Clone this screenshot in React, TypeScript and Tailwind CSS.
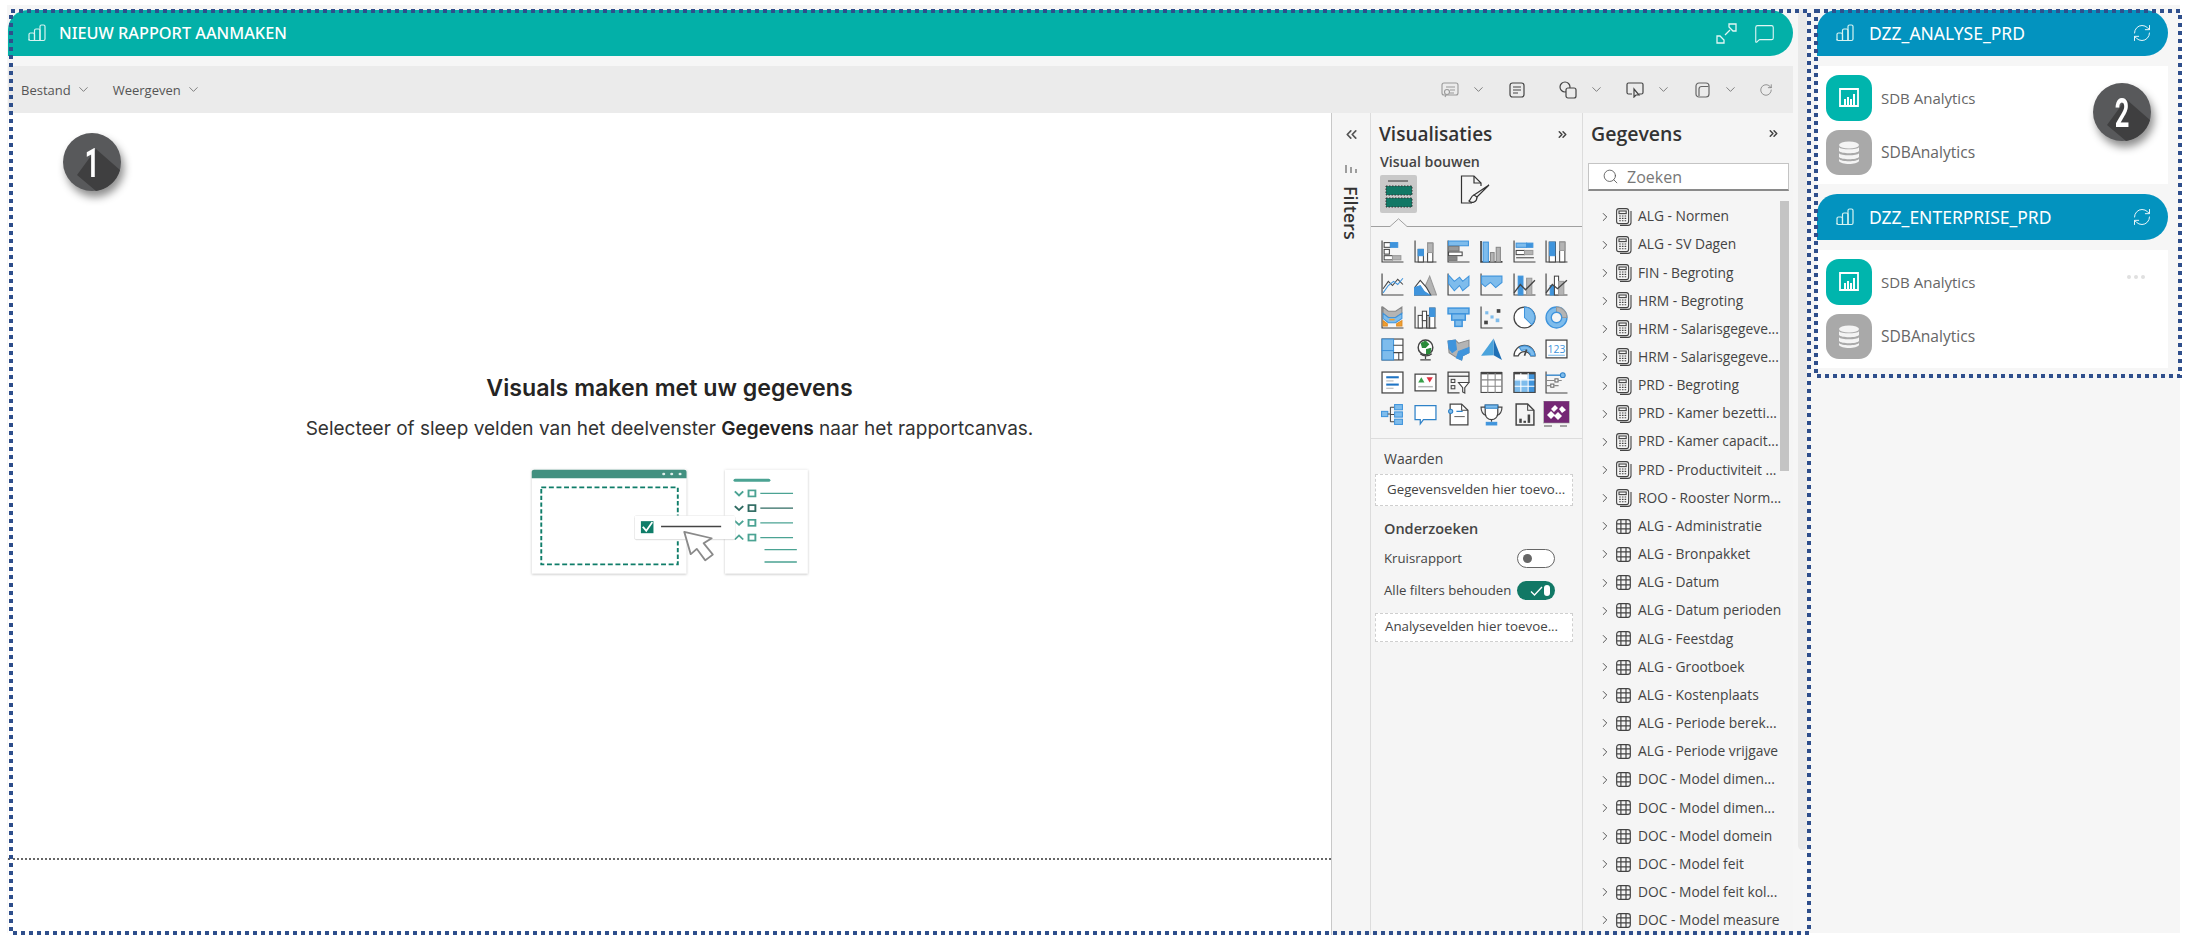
import React from "react";
import { ChevronDown, ChevronRight, ChevronsLeft, ChevronsRight, RefreshCw, RotateCw, Search, MessageSquare } from "lucide-react";

const B = "#3f94dc";
const L = "#7ebcec";
const G = "#b4b4b4";
const D = "#454545";

function I({ children }: { children: React.ReactNode }) {
  return (
    <svg width="23" height="23" viewBox="0 0 22 22" fill="none" stroke={D} strokeWidth="1">
      {children}
    </svg>
  );
}
const Axis = () => <path d="M1 0.5V21H21.5" stroke={D} strokeWidth="1.1" />;

const vizIcons: React.ReactNode[] = [
  <I><Axis /><rect x="3" y="2.5" width="6" height="4.5" fill="#fff" /><rect x="9" y="2.5" width="7" height="4.5" fill={B} stroke={B} /><rect x="3" y="9" width="5" height="4.5" fill="#fff" /><rect x="3" y="15" width="8" height="4" fill="#fff" /><rect x="11" y="15" width="8" height="4" fill={G} stroke="#999" /></I>,
  <I><Axis /><rect x="4" y="9" width="5" height="12" fill="#fff" /><rect x="4" y="9" width="5" height="6" fill={B} stroke={B} /><rect x="13" y="3" width="5" height="18" fill="#fff" /><rect x="13" y="3" width="5" height="9" fill={G} stroke="#999" /></I>,
  <I><Axis /><rect x="1.5" y="1" width="19" height="4.5" fill={L} stroke={B} /><rect x="1.5" y="6" width="10" height="4.5" fill="#999" stroke="#777" /><rect x="1.5" y="11.5" width="13" height="3.5" fill="#fff" /><rect x="1.5" y="16" width="8" height="3.5" fill="#888" stroke="#777" /></I>,
  <I><path d="M1 1V21H21.5" strokeWidth="1.6" /><rect x="3" y="2" width="5" height="19" fill={L} stroke={B} /><rect x="10" y="12" width="3.5" height="9" fill={G} stroke="#888" /><rect x="15.5" y="7" width="4" height="14" fill={G} stroke="#888" /></I>,
  <I><Axis /><rect x="3" y="3" width="10" height="4" fill={L} stroke={B} /><rect x="13" y="3" width="6" height="4" fill={B} stroke={B} /><rect x="3" y="10" width="8" height="4" fill="#fff" /><rect x="11" y="10" width="8" height="4" fill={G} stroke="#999" /><path d="M3 17H20" /></I>,
  <I><Axis /><rect x="4" y="2" width="6" height="19" fill="#fff" /><rect x="4.5" y="2" width="5" height="13" fill={B} stroke={B} /><rect x="14" y="2" width="5" height="19" fill="#fff" /><rect x="14" y="2" width="5" height="8" fill={G} stroke="#999" /></I>,

  <I><Axis /><path d="M2 15L7 8L11 12L16 6L21 11" stroke={D} /><path d="M2 19L7 12L12 8L16 11L21 5" stroke={B} /></I>,
  <I><path d="M0.5 21L7 10L10 14L15 3L21.5 21Z" fill={G} stroke="#999" /><path d="M0.5 21V14L6 7L12 14L16 21Z" fill="#fff" stroke={D} /><path d="M0.5 21V14L6 12L10 18L15 21Z" fill={B} stroke={B} /></I>,
  <I><Axis /><path d="M1.5 2L7 8L12 4L15 8L21 3V12L15 17L12 12L7 17L1.5 10Z" fill={L} stroke={B} /></I>,
  <I><Axis /><path d="M1.5 3H21V9L15 14L10 9L5 13L1.5 10Z" fill={L} stroke={B} /></I>,
  <I><Axis /><rect x="5" y="3" width="4.5" height="18" fill={B} stroke={B} /><rect x="13" y="5" width="5" height="16" fill={G} stroke="#999" /><path d="M1 19L7 11L12 16L21 7" stroke={D} strokeWidth="1.3" /></I>,
  <I><Axis /><rect x="5" y="12" width="4" height="9" fill={B} stroke={B} /><rect x="9" y="3" width="4" height="18" fill="#fff" /><rect x="13" y="8" width="5" height="13" fill={G} stroke="#999" /><path d="M1 19L7 11L12 15L21 7" stroke={D} strokeWidth="1.3" /></I>,

  <I><Axis /><path d="M2 1L7 5H14L20 1V7L14 11H7L2 7Z" fill={G} stroke="#888" /><path d="M2 7L7 11H14L20 7V12L14 16H7L2 12Z" fill={L} stroke={B} /><path d="M2 14L6 17V19H2ZM20 14V19H15V17Z" fill="#f0a030" stroke="#e08a20" /><path d="M8 13H13" stroke="#f0a030" strokeWidth="1.6" /></I>,
  <I><Axis /><rect x="4" y="9" width="4" height="12" fill="#fff" /><rect x="8" y="5" width="4" height="9" fill="#fff" /><rect x="12" y="9" width="3" height="12" fill={G} /><rect x="15" y="2" width="5" height="19" fill="#fff" /><rect x="15" y="2" width="5" height="8" fill={B} stroke={B} /></I>,
  <I><rect x="1" y="2" width="20" height="5.5" fill={L} stroke={B} strokeWidth="1.4" /><rect x="4.5" y="7.5" width="13" height="6" fill={L} stroke={B} strokeWidth="1.4" /><rect x="7.5" y="13.5" width="7" height="6" fill={L} stroke={B} strokeWidth="1.4" /></I>,
  <I><Axis /><rect x="5" y="5" width="3" height="3" fill={L} stroke="none" /><rect x="16" y="3" width="3.5" height="3.5" fill={D} stroke="none" /><rect x="10" y="9" width="3" height="3" fill={L} stroke="none" /><rect x="4" y="14" width="3.5" height="3.5" fill={D} stroke="none" /><rect x="15" y="12" width="3.5" height="3.5" fill={L} stroke="none" /></I>,
  <I><circle cx="11" cy="11" r="10" fill="#fff" strokeWidth="1.2" /><path d="M11 1A10 10 0 0 1 18 18L11 11Z" fill={L} stroke={B} /></I>,
  <I><circle cx="11" cy="11" r="10" fill={L} stroke={B} strokeWidth="1.3" /><path d="M11 1A10 10 0 0 1 21 11H16A5 5 0 0 0 11 6Z" fill={G} stroke="#999" /><circle cx="11" cy="11" r="5" fill="#f5f5f5" stroke={B} strokeWidth="1.3" /></I>,

  <I><rect x="1" y="1" width="20" height="20" fill="#fff" strokeWidth="1.1" /><rect x="1" y="1" width="11" height="11" fill={L} stroke={B} /><rect x="1" y="12" width="11" height="9" fill={L} stroke={B} /><path d="M12 7H21M12 14H21M17 14V21" /></I>,
  <I><circle cx="11" cy="9" r="7" fill="#fff" strokeWidth="1.4" /><path d="M7 5L11 3L14 6L11 9L8 9ZM12 11L16 10L15 15L12 15Z" fill="#2a8a3a" stroke="#2a8a3a" /><path d="M17 15A8 8 0 0 1 6 15M11 17V20M6 21H16" strokeWidth="1.2" /></I>,
  <I><path d="M1 3L8 2L11 5L21 2V14L15 17L14 21L8 18L2 14Z" fill={G} stroke="#888" /><path d="M1 3L8 2L9 11L5 14L2 10Z" fill={B} stroke={B} /><path d="M11 13L21 9V14L15 17L14 21L9 19Z" fill={B} stroke={B} /></I>,
  <I><path d="M13 0.5L21 21L13 16.5Z" fill="#1f6fb5" stroke="none" /><path d="M13 0.5L1 17L13 16.5Z" fill="#4aa3dc" stroke="none" /></I>,
  <I><path d="M1 17A10 10 0 0 1 21 17H17A6.5 6.5 0 0 0 5 17Z" fill="#fff" strokeWidth="1.2" /><path d="M6 9A10 10 0 0 1 21 17H17A6.5 6.5 0 0 0 8 12Z" fill={L} stroke={B} /><path d="M11 17L13 11" strokeWidth="1.6" /></I>,
  <I><rect x="1" y="2" width="20" height="17" fill="#fff" strokeWidth="1.2" /><text x="11" y="14" textAnchor="middle" fontSize="10" fill={B} stroke="none" fontFamily="'Open Sans', sans-serif">123</text><path d="M3 16.5H19" stroke={L} /></I>,

  <I><rect x="1" y="1" width="20" height="20" fill="#fff" strokeWidth="1.2" /><path d="M5 6H17" stroke="#1f74c4" strokeWidth="2" /><path d="M5 9.5H12" stroke={G} /><path d="M5 13H17" stroke="#1f74c4" strokeWidth="2" /><path d="M5 16.5H12" stroke={G} /></I>,
  <I><rect x="1" y="3" width="20" height="16" fill="#fff" strokeWidth="1.2" /><path d="M4 11L7 6L10 11Z" fill="#3aa04a" stroke="none" /><path d="M12 6H18L15 11Z" fill="#e03040" stroke="none" /><path d="M4 15H18" stroke={G} strokeWidth="1.4" /></I>,
  <I><path d="M12 21H1V1H21V11" strokeWidth="1.2" /><path d="M1 5H21" strokeWidth="1.2" /><rect x="4" y="8" width="3.5" height="3" /><rect x="4" y="14" width="3.5" height="3" /><path d="M11 11H21L17 16V21L15 20V16Z" fill="#fff" strokeWidth="1.1" /></I>,
  <I><rect x="1" y="1.5" width="20" height="19" fill="#fff" /><path d="M1 2H21" strokeWidth="2.4" /><path d="M1 8.5H21M1 14.5H21M7.5 2V21M14.5 2V21" stroke="#888" /></I>,
  <I><rect x="1" y="1.5" width="20" height="19" fill="#fff" /><rect x="1" y="8" width="13" height="13" fill={L} stroke="none" /><rect x="14" y="2" width="7" height="19" fill={B} stroke="none" /><path d="M1 2H21" strokeWidth="2.4" /><path d="M1 8.5H21M1 14.5H21M7.5 2V21M14.5 2V21" stroke="#fff" /><rect x="1" y="1.5" width="20" height="19" /></I>,
  <I><Axis /><path d="M1 4H15" stroke="#2f82c8" strokeWidth="1.3" /><circle cx="17" cy="4" r="2.3" fill={L} stroke="#2f82c8" /><path d="M1 9H9M13 9H16M1 14H5M9 14H13" stroke="#888" /><rect x="9.5" y="7.5" width="3" height="3" stroke="#666" fill="#fff" /><rect x="5.5" y="12.5" width="3" height="3" stroke="#666" fill="#fff" /></I>,

  <I><rect x="0.5" y="8" width="6" height="5" fill={L} stroke={B} /><path d="M6.5 10.5H9M9 4V18M9 4H13M9 11H13M9 18H13" /><rect x="13" y="1.5" width="7.5" height="5" fill={L} stroke={B} /><rect x="13" y="8.5" width="7.5" height="5" fill={L} stroke={B} /><rect x="13" y="15.5" width="7.5" height="5" fill={L} stroke={B} /></I>,
  <I><path d="M1 2.5H21V16H9L6 20V16H1Z" fill="#fff" stroke="#2f82c8" strokeWidth="1.2" /></I>,
  <I><path d="M3 1H14L20 7V21H3Z" fill="#fff" strokeWidth="1.2" /><path d="M14 1V7H20" /><circle cx="3.5" cy="8" r="2" fill={L} stroke="#2f82c8" /><path d="M9 8H15" stroke="#2f82c8" strokeWidth="1.2" /><path d="M7 13H17" stroke="#666" /></I>,
  <I><path d="M5 2H17V10A6 6 0 0 1 5 10Z" fill="#fff" strokeWidth="1.2" /><path d="M5 2H17V5H5Z" fill={L} stroke="#2f82c8" /><path d="M5 4H1C1 9 3 11 6 12M17 4H21C21 9 19 11 16 12M11 16V18" strokeWidth="1.1" /><rect x="6" y="18.5" width="10" height="2.5" fill={B} stroke={B} /></I>,
  <I><path d="M3 1H14L20 7V21H3Z" fill="#f4f4f4" strokeWidth="1.4" /><path d="M14 1V7H20" /><rect x="6" y="15" width="2.4" height="4" fill={D} stroke="none" /><rect x="10" y="17" width="2.4" height="2" fill={D} stroke="none" /><rect x="14" y="11" width="2.4" height="8" fill={D} stroke="none" /></I>,
  <svg width="27" height="27" viewBox="0 0 27 27">
    <rect x="1" y="0" width="25" height="22" fill="#742774" />
    <rect x="0.5" y="0" width="26" height="22" fill="none" stroke="#999" strokeWidth="0.6" />
    <path d="M8 8L12 4L15 7L11 11ZM16 8L19 5L23 9L19 12ZM8 10L12 14L8 18L4 14ZM15 11L19 15L15 19L11 15Z" fill="#fff" />
    <path d="M1 25H9M17 25H24" stroke="#888" strokeWidth="1.4" />
  </svg>,
];

const dataRows: [string, boolean][] = [
  ["ALG - Normen", true], ["ALG - SV Dagen", true], ["FIN - Begroting", true], ["HRM - Begroting", true],
  ["HRM - Salarisgegeve...", true], ["HRM - Salarisgegeve...", true], ["PRD - Begroting", true],
  ["PRD - Kamer bezetti...", true], ["PRD - Kamer capacit...", true], ["PRD - Productiviteit ...", true],
  ["ROO - Rooster Norm...", true], ["ALG - Administratie", false], ["ALG - Bronpakket", false], ["ALG - Datum", false],
  ["ALG - Datum perioden", false], ["ALG - Feestdag", false], ["ALG - Grootboek", false], ["ALG - Kostenplaats", false],
  ["ALG - Periode berek...", false], ["ALG - Periode vrijgave", false], ["DOC - Model dimen...", false],
  ["DOC - Model dimen...", false], ["DOC - Model domein", false], ["DOC - Model feit", false],
  ["DOC - Model feit kol...", false], ["DOC - Model measure", false],
];

function BarsIcon() {
  return (
    <svg width="18" height="18" viewBox="0 0 18 18" fill="none" stroke="#d8f3f1" strokeWidth="1.2">
      <path d="M1 16.5V10.5A1.5 1.5 0 0 1 2.5 9H5A1.5 1.5 0 0 1 6.5 10.5V16.5" />
      <path d="M6.5 16.5V6.5A1.5 1.5 0 0 1 8 5H10.5A1.5 1.5 0 0 1 12 6.5V16.5" />
      <path d="M12 16.5V2.5A1.5 1.5 0 0 1 13.5 1H15.5A1.5 1.5 0 0 1 17 2.5V15A1.5 1.5 0 0 1 15.5 16.5H2.5A1.5 1.5 0 0 1 1 15" />
    </svg>
  );
}

function ExpandIcon() {
  return (
    <svg width="21" height="21" viewBox="0 0 21 21" fill="none" stroke="#e2f6f4" strokeWidth="1.3">
      <path d="M13 1H20V8H17L13 4Z" />
      <path d="M1 13H4L8 17V20H1Z" />
      <path d="M9 12L14 7" />
    </svg>
  );
}

function Calc() {
  return (
    <svg width="16" height="18" viewBox="0 0 16 18" fill="none" stroke="#444" strokeWidth="1.1">
      <rect x="0.6" y="0.6" width="12" height="15" rx="2.4" />
      <rect x="3" y="3" width="7.2" height="2.6" />
      <path d="M3.2 8H4.8M5.9 8H7.5M8.6 8H10.2M3.2 10.4H4.8M5.9 10.4H7.5M8.6 10.4H10.2M3.2 12.8H4.8M5.9 12.8H7.5M8.6 12.8H10.2" />
      <path d="M15 3V14.5A3 3 0 0 1 12 17.4H4" />
    </svg>
  );
}

function TableI() {
  return (
    <svg width="15" height="15" viewBox="0 0 15 15" fill="none" stroke="#444" strokeWidth="1.2">
      <rect x="0.7" y="0.7" width="13.6" height="13.6" rx="2.5" />
      <path d="M0.7 4.9H14.3M0.7 9.9H14.3M4.9 0.7V14.3M10 0.7V14.3" />
    </svg>
  );
}

function SmallChevron() {
  return <ChevronDown size={15} strokeWidth={1.3} className="text-[#666]" />;
}

function Toggle({ on }: { on: boolean }) {
  return on ? (
    <div className="flex h-[19px] w-[38px] shrink-0 items-center justify-end gap-[1px] rounded-full bg-[#117865] pr-[5px]">
      <svg width="13" height="10" viewBox="0 0 13 10" fill="none" stroke="#fff" strokeWidth="1.3"><path d="M1 5.5L4.5 9L12 1" /></svg>
      <div className="h-[11px] w-[6px] rounded-full bg-white" />
    </div>
  ) : (
    <div className="flex h-[19px] w-[38px] shrink-0 items-center rounded-full border border-[#666] bg-white pl-[5px]">
      <div className="h-[9px] w-[9px] rounded-full bg-[#666]" />
    </div>
  );
}

function Badge({ n, cls }: { n: string; cls: string }) {
  return (
    <div className={`absolute h-[58px] w-[58px] rounded-full bg-[#58595b] shadow-[3px_6px_9px_rgba(0,0,0,0.45)] ${cls}`}>
      <svg width="58" height="58" viewBox="0 0 58 58" className="absolute inset-0">
        <path d="M33 16L57 37A29 29 0 0 1 33 58L14 42Z" fill="#3f3f40" />
      </svg>
      <div className="absolute inset-0 flex scale-x-[0.85] scale-y-[1.35] items-center justify-center text-[30px] font-bold text-white [font-family:'Roboto',sans-serif]">{n}</div>
    </div>
  );
}

function Section({ title, ellipsis, mt }: { title: string; ellipsis?: boolean; mt?: boolean }) {
  return (
    <div className={mt ? "mt-[10px]" : ""}>
      <div className="flex h-[46px] items-center rounded-tl-[20px] rounded-r-[23px] bg-[#0393bf] pl-[19px] pr-[16px] text-white">
        <BarsIcon />
        <span className="ml-[15px] flex-1 text-[17.5px] [font-family:'Noto_Sans',sans-serif]">{title}</span>
        <RefreshCw size={20} strokeWidth={1.2} className="text-[#e6f5fa]" />
      </div>
      <div className="mt-[10px] h-[118px] bg-white pl-[9px] pt-[9px]">
        <div className="flex h-[46px] items-center">
          <div className="flex h-[46px] w-[46px] items-center justify-center rounded-[13px] bg-[#00b5ad]">
            <svg width="20" height="20" viewBox="0 0 20 20" fill="none">
              <path d="M1 1H19V18H1Z" stroke="#fff" strokeWidth="1.8" />
              <rect x="5" y="11" width="2" height="6" fill="#fff" /><rect x="8" y="9" width="2" height="8" fill="#fff" /><rect x="11" y="11" width="2" height="6" fill="#fff" /><rect x="14" y="6" width="2" height="11" fill="#fff" />
            </svg>
          </div>
          <span className="ml-[9px] flex-1 text-[15px] text-[#666]">SDB Analytics</span>
          {ellipsis && (
            <div className="mr-[23px] mt-[-11px] flex gap-[3px]">
              <div className="h-[4px] w-[4px] rounded-full bg-[#e0e0e0]" />
              <div className="h-[4px] w-[4px] rounded-full bg-[#e0e0e0]" />
              <div className="h-[4px] w-[4px] rounded-full bg-[#e0e0e0]" />
            </div>
          )}
        </div>
        <div className="mt-[9px] flex h-[45px] items-center">
          <div className="flex h-[45px] w-[46px] items-center justify-center rounded-[13px] bg-[#a9a9a9]">
            <svg width="22" height="24" viewBox="0 0 22 24" fill="#f4f4f4">
              <ellipse cx="11" cy="4" rx="10" ry="3.6" />
              <path d="M1 6.2C3 9 19 9 21 6.2V10C19 13 3 13 1 10Z" />
              <path d="M1 12.2C3 15 19 15 21 12.2V16C19 19 3 19 1 16Z" />
              <path d="M1 18C3 21 19 21 21 18V20C19 24 3 24 1 20Z" />
            </svg>
          </div>
          <span className="ml-[9px] mt-[1px] text-[15.6px] text-[#666]">SDBAnalytics</span>
        </div>
      </div>
    </div>
  );
}

function Illustration() {
  return (
    <svg width="278" height="107" viewBox="128 325 731 320" preserveAspectRatio="none" fill="none" className="overflow-visible">
      <g style={{ filter: "drop-shadow(0 2px 3px rgba(0,0,0,0.25))" }}>
        <rect x="130" y="327" width="407" height="311" fill="#fff" />
        <rect x="638" y="327" width="218" height="311" fill="#fff" />
      </g>
      <path d="M130 353V333A6 6 0 0 1 136 327H531A6 6 0 0 1 537 333V353Z" fill="#429080" />
      <circle cx="477" cy="340" r="4" fill="#dfeeea" /><circle cx="498" cy="340" r="4" fill="#dfeeea" /><circle cx="520" cy="340" r="4" fill="#dfeeea" />
      <rect x="155" y="380" width="359" height="230" stroke="#0f7d69" strokeWidth="5" strokeDasharray="13 7" />
      <path d="M665 359H753" stroke="#4ba393" strokeWidth="9" strokeLinecap="round" />
      {[398, 442, 486, 530].map((y, i) => {
        const c = i === 1 ? "#2f6b62" : "#4ba393";
        return (
          <g key={y} stroke={c} strokeWidth="5">
            <path d={i === 3 ? `M664 ${y + 6}L675 ${y - 6}L686 ${y + 6}` : `M664 ${y - 6}L675 ${y + 6}L686 ${y - 6}`} />
            <rect x="700" y={y - 9} width="18" height="18" />
            <path d={`M731 ${y}H817`} strokeWidth="4" />
          </g>
        );
      })}
      <path d="M742 566H827M742 603H827" stroke="#4ba393" strokeWidth="4" />
      <g style={{ filter: "drop-shadow(0 1px 2px rgba(0,0,0,0.3))" }}>
        <rect x="400" y="464" width="265" height="71" rx="5" fill="#fff" />
      </g>
      <rect x="417" y="481" width="33" height="36" fill="#0f7d69" />
      <path d="M422 498L431 510L447 484" stroke="#fff" strokeWidth="5" />
      <path d="M470 497H628" stroke="#444" strokeWidth="5" />
      <path d="M531 513L548 580L564 564L586 598L606 581L582 547L603 532Z" fill="#fff" stroke="#8a8a8a" strokeWidth="5" strokeLinejoin="round" />
    </svg>
  );
}

export default function App() {
  return (
    <div className="relative h-[941px] w-[2187px] overflow-hidden bg-white [font-family:'Open_Sans',sans-serif]">
      <div className="ml-[7px] mt-[5px] flex h-[928px] w-[2173px] bg-[#f6f6f6] pt-[5px]">
        {/* Left column */}
        <div className="ml-[1px] flex w-[1785px] flex-col">
          <div className="flex h-[46px] shrink-0 items-center rounded-tl-[20px] rounded-r-[23px] bg-[#03b0a8] pl-[20px] pr-[18px] text-white">
            <BarsIcon />
            <span className="ml-[13px] flex-1 text-[16.3px] font-medium [font-family:'Noto_Sans',sans-serif]">NIEUW RAPPORT AANMAKEN</span>
            <ExpandIcon />
            <div className="ml-[17px]"><MessageSquare size={21} strokeWidth={1.25} className="text-[#e2f6f4]" /></div>
          </div>
          <div className="mt-[10px] flex h-[47px] shrink-0 items-center bg-[#ebebeb] pl-[13px] text-[13px] text-[#555]">
            <span className="mt-[2px]">Bestand</span>
            <div className="ml-[5px]"><SmallChevron /></div>
            <span className="ml-[22px] mt-[2px]">Weergeven</span>
            <div className="ml-[5px]"><SmallChevron /></div>
            <div className="flex-1" />
            <svg width="18" height="16" viewBox="0 0 18 16" fill="none" stroke="#999" strokeWidth="1.1">
              <rect x="1" y="1" width="16" height="12" rx="2" /><path d="M5 5H14M9 8H14M9 11H13" /><circle cx="6" cy="10" r="2.5" fill="#ebebeb" /><path d="M5 13L4 15" />
            </svg>
            <div className="ml-[11.5px]"><SmallChevron /></div>
            <svg className="ml-[23.5px]" width="16" height="16" viewBox="0 0 16 16" fill="none" stroke="#444" strokeWidth="1.2">
              <rect x="1" y="1" width="14" height="14" rx="2.5" /><path d="M4 5H12M4 8H12M4 11H9" />
            </svg>
            <svg className="ml-[34px]" width="18" height="18" viewBox="0 0 18 18" fill="none" stroke="#444" strokeWidth="1.2">
              <circle cx="6" cy="6" r="5" /><rect x="7" y="7" width="10" height="10" rx="2" fill="#ebebeb" />
            </svg>
            <div className="ml-[11.5px]"><SmallChevron /></div>
            <svg className="ml-[22.5px]" width="18" height="16" viewBox="0 0 18 16" fill="none" stroke="#444" strokeWidth="1.2">
              <path d="M6 12H2.5A1.5 1.5 0 0 1 1 10.5V2.5A1.5 1.5 0 0 1 2.5 1H15.5A1.5 1.5 0 0 1 17 2.5V10.5A1.5 1.5 0 0 1 15.5 12H13" /><path d="M8 7V15L10 13L13 13Z" />
            </svg>
            <div className="ml-[11.5px]"><SmallChevron /></div>
            <svg className="ml-[24px]" width="15" height="16" viewBox="0 0 15 16" fill="none" stroke="#666" strokeWidth="1.2">
              <rect x="1" y="1" width="13" height="14" rx="3" /><path d="M4 14V7A2.5 2.5 0 0 1 6.5 4.5H13.5" />
            </svg>
            <div className="ml-[13px]"><SmallChevron /></div>
            <div className="ml-[21.5px] mr-[20px]"><RotateCw size={14} strokeWidth={1.3} className="text-[#777]" /></div>
          </div>
          <div className="flex flex-1">
            {/* Canvas */}
            <div className="w-[1323px] bg-white">
              <div className="flex h-[747px] flex-col items-center border-b-2 border-dotted border-[#666] pt-[259px] [font-family:'Inter',sans-serif]">
                <div className="text-[23.2px] font-semibold leading-[32px] text-[#252423]">Visuals maken met uw gegevens</div>
                <div className="mt-[12px] text-[19px] leading-[26px] text-[#333]">
                  Selecteer of sleep velden van het deelvenster <b className="font-semibold text-[#252423]">Gegevens</b> naar het rapportcanvas.
                </div>
                <div className="mt-[27px]"><Illustration /></div>
              </div>
            </div>
            {/* Filters */}
            <div className="flex w-[39px] flex-col items-center border-l border-[#c8c8c8] bg-[#f5f5f5] pt-[13px]">
              <ChevronsLeft size={17} strokeWidth={2.4} className="text-[#555]" />
              <svg className="mt-[20px]" width="12" height="12" viewBox="0 0 12 12" fill="none" stroke="#555" strokeWidth="1.1">
                <path d="M1 2V10M6 4V10M11 6V10" />
              </svg>
              <div className="mt-[11px] text-[18px] font-semibold leading-[22px] text-[#333] [writing-mode:vertical-rl]">Filters</div>
            </div>
            {/* Visualisaties */}
            <div className="w-[212px] border-l border-[#dcdcdc] bg-[#f5f5f5] text-[#444]">
              <div className="flex h-[40px] items-center justify-between pl-[8px] pr-[13px] pt-[3px]">
                <span className="text-[19px] font-semibold text-[#333]">Visualisaties</span>
                <ChevronsRight size={13} strokeWidth={2.8} className="text-[#444]" />
              </div>
              <div className="flex h-[18px] items-center pl-[9px] text-[14.2px] font-semibold text-[#444]">Visual bouwen</div>
              <div className="mt-[4px] flex h-[38px] pl-[9px]">
                <div className="flex h-[38px] w-[37px] items-center justify-center rounded-[2px] bg-[#c9c9c9]">
                  <svg width="28" height="30" viewBox="0 0 28 30" fill="none">
                    <path d="M3 2H23" stroke="#333" strokeWidth="1" />
                    <rect x="1" y="7" width="26" height="9" fill="#117865" stroke="#333" strokeDasharray="1.5 1.5" />
                    <rect x="1" y="19" width="26" height="9" fill="#117865" stroke="#333" strokeDasharray="1.5 1.5" />
                  </svg>
                </div>
                <svg className="ml-[43px]" width="30" height="30" viewBox="0 0 30 30" fill="none" stroke="#333" strokeWidth="1.2">
                  <path d="M12 28H1.5V1H14L21 8V11" /><path d="M14 1V8H21" />
                  <path d="M29 10L17 22L14 20Z" /><path d="M14 20C11 21 11 24 9 26C12 29 17 27 17 22" />
                </svg>
              </div>
              <svg className="mt-[5px] block" width="211" height="9" viewBox="0 0 211 9" fill="none" stroke="#a0a0a0" strokeWidth="1">
                <path d="M0 8.5H19L27.5 0.8L36 8.5H211" />
              </svg>
              <div className="mt-[8.7px] grid grid-cols-[repeat(6,32.8px)] auto-rows-[32.6px] pl-[5.6px]">
                {vizIcons.map((ic, i) => (
                  <div key={i} className="flex items-center justify-center">{ic}</div>
                ))}
              </div>
              <div className="mt-[6.7px] border-t border-[#dcdcdc]" />
              <div className="ml-[13px] mt-[11px] flex h-[18px] items-center text-[14px]">Waarden</div>
              <div className="ml-[4px] mt-[6px] flex h-[32px] w-[198px] items-center whitespace-nowrap border border-dashed border-[#cfcfcf] bg-white pl-[11px] text-[13.3px]">Gegevensvelden hier toevo...</div>
              <div className="ml-[13px] mt-[13px] flex h-[20px] items-center text-[14.5px] font-semibold">Onderzoeken</div>
              <div className="ml-[13px] mt-[10px] flex h-[20px] w-[171px] items-center justify-between text-[13.2px]">
                <span>Kruisrapport</span><Toggle on={false} />
              </div>
              <div className="ml-[13px] mt-[12px] flex h-[20px] w-[171px] items-center justify-between whitespace-nowrap text-[13.2px]">
                <span>Alle filters behouden</span><Toggle on />
              </div>
              <div className="ml-[4px] mt-[12px] flex h-[29px] w-[198px] items-center whitespace-nowrap border border-dashed border-[#cfcfcf] bg-white pl-[9px] text-[13.3px]">Analysevelden hier toevoe...</div>
            </div>
            {/* Gegevens */}
            <div className="flex w-[211px] flex-col overflow-hidden border-l border-[#dcdcdc] bg-[#f5f5f5]">
              <div className="flex h-[40px] items-center justify-between pl-[8px] pr-[13px] pt-[1px]">
                <span className="text-[19.5px] font-semibold text-[#333]">Gegevens</span>
                <ChevronsRight size={13} strokeWidth={2.8} className="text-[#444]" />
              </div>
              <div className="ml-[5px] mt-[10px] flex h-[28px] w-[201px] shrink-0 items-center border border-b-2 border-[#c4c4c4] border-b-[#8a8a8a] bg-white pl-[13px]">
                <Search size={17} strokeWidth={1.2} className="text-[#555]" />
                <span className="ml-[8px] mt-[1px] text-[16px] text-[#777]">Zoeken</span>
              </div>
              <div className="mt-[11.5px] flex">
                <div className="w-[197px] shrink-0">
                  {dataRows.map(([t, calc], i) => (
                    <div key={i} className="flex h-[28.17px] items-center whitespace-nowrap pl-[15px] text-[13.8px] text-[#444]">
                      <ChevronRight size={14} strokeWidth={1.4} className="shrink-0 text-[#333]" />
                      <div className="ml-[4px] flex w-[22px] shrink-0 items-center">{calc ? <Calc /> : <TableI />}</div>
                      <span>{t}</span>
                    </div>
                  ))}
                </div>
                <div className="mt-[-2px] h-[270px] w-[9px] shrink-0 bg-[#c4c4c4]" />
              </div>
            </div>
          </div>
        </div>
        {/* Scroll strip */}
        <div className="ml-[5px] h-[840px] w-[9px] rounded-b-[5px] bg-[#e9e9e9]" />
        {/* Right column */}
        <div className="ml-[10px] w-[351px]">
          <Section title="DZZ_ANALYSE_PRD" />
          <Section title="DZZ_ENTERPRISE_PRD" ellipsis mt />
        </div>
      </div>

      {/* Annotation overlays */}
      <svg className="pointer-events-none absolute left-0 top-0" width="2187" height="941" fill="none" stroke="#2f4f8c" strokeWidth="4" strokeDasharray="4 4">
        <rect x="11" y="11" width="1798" height="922" />
        <rect x="1816" y="11" width="364" height="365" />
      </svg>
      <Badge n="1" cls="left-[63px] top-[133px]" />
      <Badge n="2" cls="left-[2093px] top-[83px]" />
    </div>
  );
}
